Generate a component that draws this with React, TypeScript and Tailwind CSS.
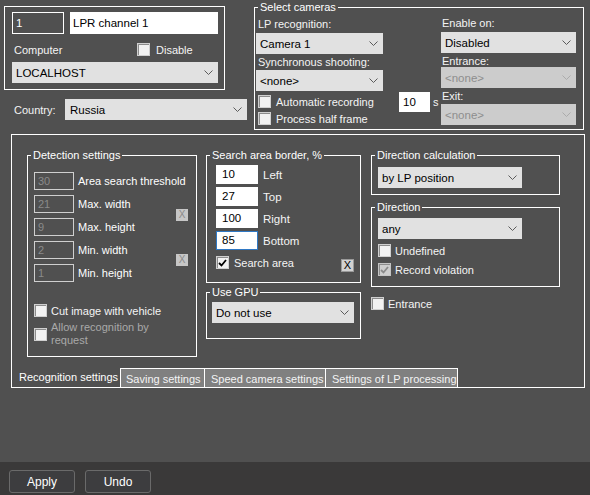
import React from "react";

const Chevron = ({ color = "#5b5b5b" }: { color?: string }) => (
  <svg width="9" height="5" viewBox="0 0 9 5" className="shrink-0">
    <polyline points="0.5,0.5 4.5,4.5 8.5,0.5" fill="none" stroke={color} strokeWidth="1" />
  </svg>
);

function Select({ text, className = "", disabled = false }: { text: string; className?: string; disabled?: boolean }) {
  return (
    <div
      className={`flex items-center justify-between pl-[4px] pr-[5px] text-[11.5px] ${
        disabled ? "bg-[#cccccc] text-[#8e8e8e]" : "bg-[#e1e1e1] text-black"
      } ${className}`}
    >
      <span>{text}</span>
      <Chevron color={disabled ? "#ababab" : "#5b5b5b"} />
    </div>
  );
}

function Check({ checked = false, grey = false, className = "" }: { checked?: boolean; grey?: boolean; className?: string }) {
  return (
    <div
      className={`w-[13px] h-[13px] shrink-0 flex items-center justify-center border ${
        grey ? "bg-[#cdcdcd] border-[#c4c4c4]" : "bg-[#f2f2f2] border-[#d0d0d0]"
      } shadow-[inset_1px_1px_0_#8c8c8c] ${className}`}
    >
      {checked && (
        <svg width="9" height="8" viewBox="0 0 9 8">
          <polyline points="1,4 3.5,6.5 8,1" fill="none" stroke={grey ? "#8a8a8a" : "#000"} strokeWidth="1.8" />
        </svg>
      )}
    </div>
  );
}

function Group({ legend, className = "", children }: { legend?: string; className?: string; children?: React.ReactNode }) {
  return (
    <div className={`relative border border-white ${className}`}>
      {legend && (
        <span className="absolute left-[3px] top-[-8px] px-[2px] bg-[#505050] leading-[14px] text-white whitespace-nowrap">
          {legend}
        </span>
      )}
      {children}
    </div>
  );
}

function DetInput({ v }: { v: string }) {
  return (
    <div className="w-[40px] h-[18px] shrink-0 border border-[#cfcfcf] text-[#8a8a8a] pl-[3px] leading-[16px] text-[11px]">{v}</div>
  );
}

function AreaInput({ v, focus = false }: { v: string; focus?: boolean }) {
  return (
    <div
      className={`w-[42px] h-[19px] shrink-0 bg-white text-black pl-[5px] leading-[17px] text-[11.5px] border ${
        focus ? "border-[#2f78c4]" : "border-white"
      }`}
    >
      {v}
    </div>
  );
}

export default function App() {
  return (
    <div className="w-[590px] h-[495px] bg-[#505050] flex flex-col text-[#f4f4f4] text-[11px] leading-[14px] font-['Liberation_Sans',Arial,sans-serif] overflow-hidden">
      <div className="flex-1 flex flex-col">
        {/* Top section */}
        <div className="flex pt-[1px]">
          <div className="ml-[4px] w-[250px] flex flex-col">
            <Group className="mt-[5px] w-[221px] h-[84px]">
              <div className="flex mt-[5px] ml-[7px]">
                <div className="w-[52px] h-[22px] border border-white pl-[3px] leading-[20px] text-white text-[11.5px]">1</div>
                <div className="ml-[6px] w-[148px] h-[22px] bg-white text-black pl-[3px] leading-[22px] text-[11.5px]">LPR channel 1</div>
              </div>
              <div className="flex items-center mt-[9px] h-[13px]">
                <span className="ml-[9px] w-[123px]">Computer</span>
                <Check />
                <span className="ml-[6px]">Disable</span>
              </div>
              <Select text="LOCALHOST" className="mt-[6px] ml-[7px] w-[206px] h-[21px]" />
            </Group>
            <div className="flex items-center mt-[9px] h-[21px]">
              <span className="ml-[10px] w-[51px]">Country:</span>
              <Select text="Russia" className="w-[182px] h-[21px] !pl-[5px]" />
            </div>
          </div>

          <Group legend="Select cameras" className="mt-[6px] w-[330px] h-[123px] flex">
            <div className="ml-[1px] w-[127px] flex flex-col">
              <span className="mt-[9px] pl-[2px] h-[14px]">LP recognition:</span>
              <Select text="Camera 1" className="mt-[2px] h-[21px]" />
              <span className="mt-[1px] pl-[2px] h-[14px]">Synchronous shooting:</span>
              <Select text="<none>" className="mt-[1px] h-[21px]" />
              <div className="flex items-center mt-[4px] h-[13px]">
                <Check className="ml-[2px]" />
                <span className="ml-[5px]">Automatic recording</span>
              </div>
              <div className="flex items-center mt-[4px] h-[13px]">
                <Check className="ml-[2px]" />
                <span className="ml-[5px]">Process half frame</span>
              </div>
            </div>
            <div className="ml-[16px] w-[42px] mt-[84px] flex items-center h-[20px]">
              <div className="w-[31px] h-[20px] bg-white text-black pl-[4px] leading-[20px] text-[11.5px]">10</div>
              <span className="ml-[3px]">s</span>
            </div>
            <div className="w-[135px] flex flex-col">
              <span className="mt-[8px] pl-[1px] h-[14px]">Enable on:</span>
              <Select text="Disabled" className="mt-[2px] h-[21px]" />
              <span className="mt-[1px] pl-[1px] h-[13px]">Entrance:</span>
              <Select text="<none>" disabled className="mt-[0px] h-[21px]" />
              <span className="mt-[1px] pl-[1px] h-[14px]">Exit:</span>
              <Select text="<none>" disabled className="mt-[1px] h-[21px]" />
            </div>
          </Group>
        </div>

        {/* Main panel */}
        <div className="mt-[4px] ml-[11px] w-[574px] h-[254px] border border-white flex flex-col">
          <div className="flex-1 flex items-start">
            {/* Detection settings */}
            <Group legend="Detection settings" className="ml-[15px] mt-[20px] w-[170px] h-[202px]">
              <div className="flex">
                <div className="w-[148px] flex flex-col gap-[5px] mt-[16px]">
                  {[
                    ["30", "Area search threshold"],
                    ["21", "Max. width"],
                    ["9", "Max. height"],
                    ["2", "Min. width"],
                    ["1", "Min. height"],
                  ].map(([v, l]) => (
                    <div key={l} className="flex items-center ml-[6px]">
                      <DetInput v={v} />
                      <span className="ml-[4px] text-white whitespace-nowrap">{l}</span>
                    </div>
                  ))}
                </div>
                <div className="flex flex-col">
                  <div className="mt-[53px] w-[12px] h-[12px] bg-[#c6c6c6] text-[#8a8a8a] text-[10px] leading-[12px] text-center">X</div>
                  <div className="mt-[33px] w-[12px] h-[12px] bg-[#c6c6c6] text-[#8a8a8a] text-[10px] leading-[12px] text-center">X</div>
                </div>
              </div>
              <div className="flex items-center mt-[22px] ml-[6px] h-[13px]">
                <Check />
                <span className="ml-[4px] whitespace-nowrap">Cut image with vehicle</span>
              </div>
              <div className="flex items-center mt-[4px] ml-[6px]">
                <Check />
                <span className="ml-[4px] text-[#a9a9a9] leading-[13px] w-[110px]">Allow recognition by request</span>
              </div>
            </Group>

            {/* Column 2 */}
            <div className="ml-[9px] w-[155px] flex flex-col mt-[20px]">
              <Group legend="Search area border, %" className="h-[128px]">
                <div className="flex flex-col gap-[3px] mt-[9px] ml-[9px]">
                  {[
                    ["10", "Left", false],
                    ["27", "Top", false],
                    ["100", "Right", false],
                    ["85", "Bottom", true],
                  ].map(([v, l, f]) => (
                    <div key={l as string} className="flex items-center">
                      <AreaInput v={v as string} focus={f as boolean} />
                      <span className="ml-[5px] text-[11.5px]">{l as string}</span>
                    </div>
                  ))}
                </div>
                <div className="flex items-start justify-between mt-[6px] ml-[9px] mr-[6px]">
                  <div className="flex items-center h-[13px]">
                    <Check checked />
                    <span className="ml-[5px]">Search area</span>
                  </div>
                  <div className="mt-[3px] w-[13px] h-[13px] bg-[#d2d2d2] border border-[#9a9a9a] text-black text-[11px] leading-[11px] text-center">X</div>
                </div>
              </Group>
              <Group legend="Use GPU" className="mt-[9px] h-[47px]">
                <Select text="Do not use" className="mt-[9px] ml-[5px] w-[142px] h-[21px]" />
              </Group>
            </div>

            {/* Column 3 */}
            <div className="ml-[10px] w-[189px] flex flex-col mt-[20px]">
              <Group legend="Direction calculation" className="h-[40px]">
                <Select text="by LP position" className="mt-[11px] ml-[6px] w-[144px] h-[21px]" />
              </Group>
              <Group legend="Direction" className="mt-[12px] h-[80px]">
                <Select text="any" className="mt-[10px] ml-[6px] w-[144px] h-[21px]" />
                <div className="flex items-center mt-[5px] ml-[6px] h-[13px]">
                  <Check />
                  <span className="ml-[4px]">Undefined</span>
                </div>
                <div className="flex items-center mt-[6px] ml-[6px] h-[13px]">
                  <Check checked grey />
                  <span className="ml-[4px]">Record violation</span>
                </div>
              </Group>
              <div className="flex items-center mt-[10px] h-[13px]">
                <Check />
                <span className="ml-[4px]">Entrance</span>
              </div>
            </div>
          </div>

          {/* Tabs */}
          <div className="flex h-[19px] text-[11px] leading-[18px]">
            <div className="w-[108px] pl-[7px] text-white whitespace-nowrap">Recognition settings</div>
            <div className="w-[84px] border-l border-t border-white bg-[#808080] pl-[5px] pt-[1px] whitespace-nowrap">Saving settings</div>
            <div className="w-[121px] border-l border-t border-white bg-[#808080] pl-[6px] pt-[1px] whitespace-nowrap">Speed camera settings</div>
            <div className="w-[133px] border-l border-t border-r border-white bg-[#808080] pl-[6px] pt-[1px] whitespace-nowrap">Settings of LP processing</div>
          </div>
        </div>
      </div>

      {/* Bottom bar */}
      <div className="h-[33px] bg-[#3a3939] flex items-start pt-[8px] pl-[9px] gap-[10px] text-[12px]">
        <div className="w-[66px] h-[23px] border border-[#6a6a6a] rounded-[3px] bg-[#3d3d3f] text-white flex items-center justify-center">Apply</div>
        <div className="w-[66px] h-[23px] border border-[#6a6a6a] rounded-[3px] bg-[#3d3d3f] text-white flex items-center justify-center">Undo</div>
      </div>
    </div>
  );
}
